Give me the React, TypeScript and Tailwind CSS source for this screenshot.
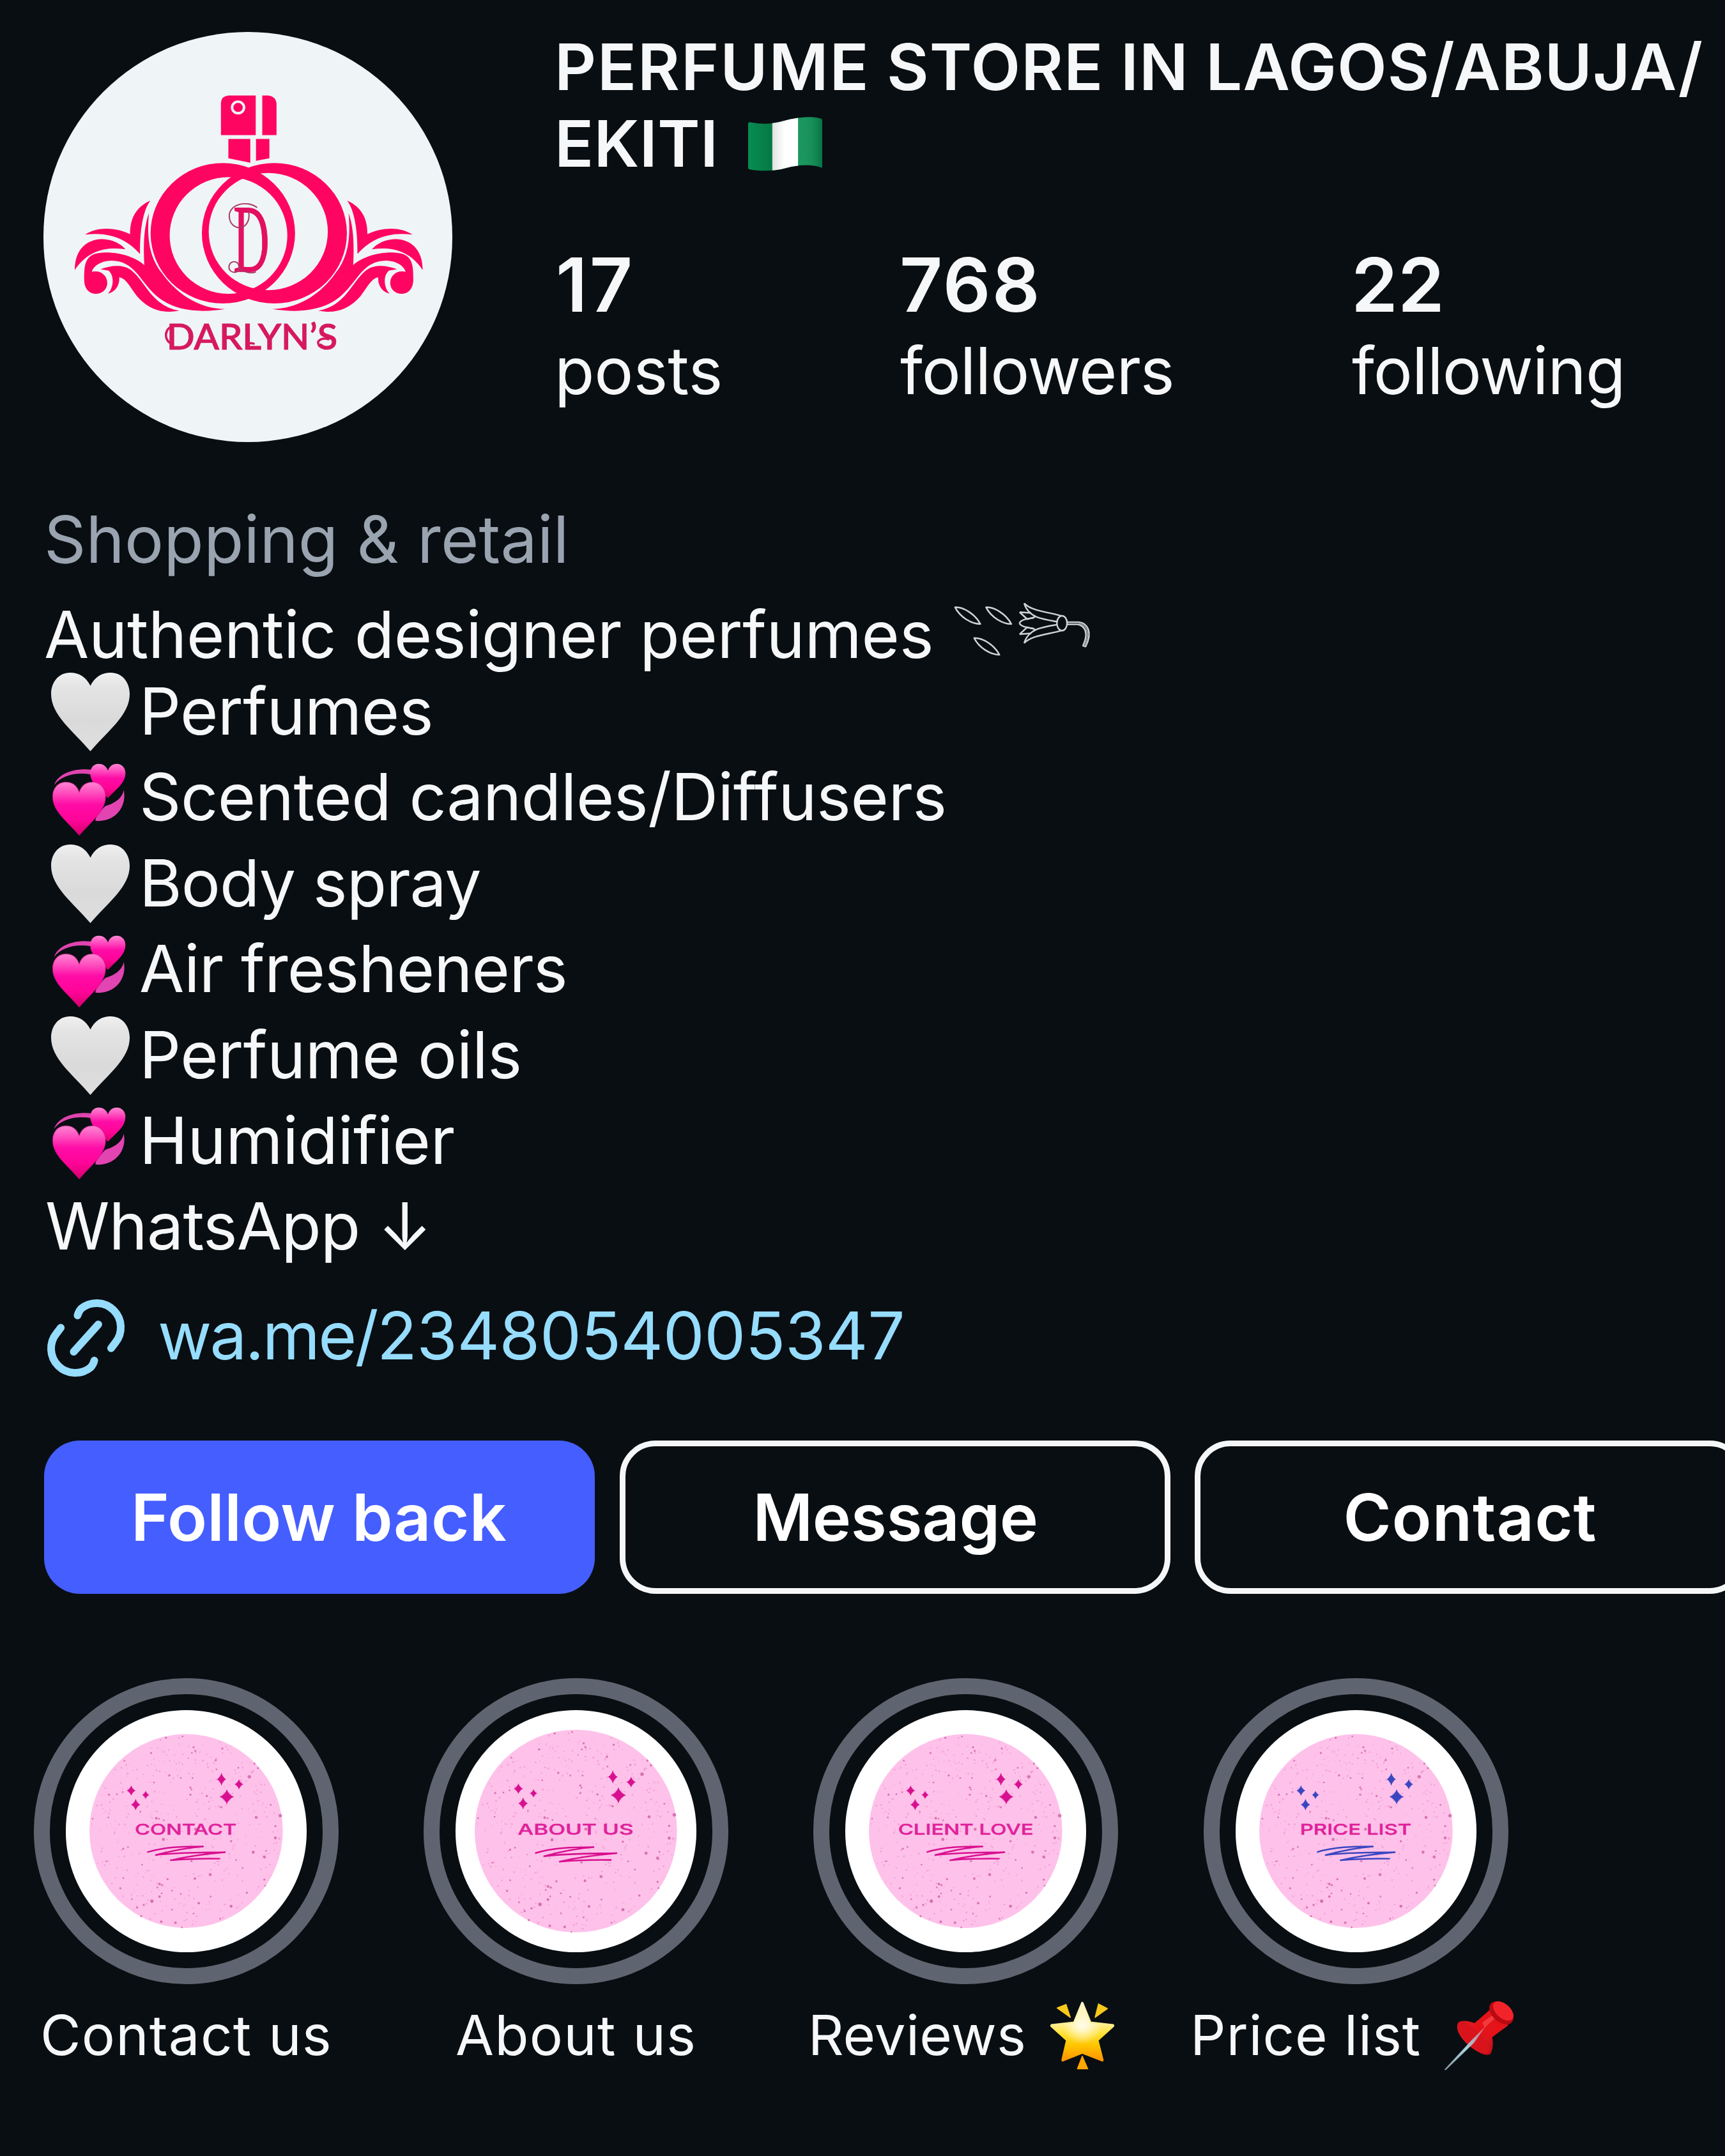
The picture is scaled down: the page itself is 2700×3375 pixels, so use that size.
import React from "react";

const WING_PATHS = [
  "M437 655 C412 690 400 760 401 848 C360 800 300 765 208 778 C250 750 310 750 366 776 C366 720 385 680 437 655Z",
  "M172 906 C172 830 215 795 268 794 C305 795 335 812 350 831 C290 822 220 830 172 906Z",
  "M245 992 C215 990 205 965 205 940 C205 890 205 845 270 843 C330 840 385 860 416 888 C412 810 415 750 432 700 C425 790 432 860 480 920 C540 1005 620 1046 700 1047 C620 1060 530 1058 465 1005 C400 950 385 872 300 872 C265 873 238 890 232 912 C262 905 287 925 286 955 C284 980 265 992 245 992Z",
  "M262 903 C300 888 340 885 368 905 C420 945 440 1035 538 1053 C480 1065 430 1048 390 1000 C365 965 350 935 328 932 C330 960 315 985 288 991 C305 975 315 930 290 908Z",
];

function Wing() {
  return (
    <>
      {WING_PATHS.map((d) => (
        <path key={d} d={d} />
      ))}
    </>
  );
}

function Avatar() {
  return (
    <div className="mt-[50px] h-[642px] w-[640px] shrink-0 overflow-hidden rounded-full bg-[#eff5f6]">
      <svg viewBox="62 45 1435 1483" preserveAspectRatio="none" className="block h-full w-full" fill="#ff0562">
        <path d="M685 418 V300 Q687 277 712 275 H807 V418Z" />
        <path d="M830 275 H850 Q878 278 880 305 V418 H830Z" />
        <circle cx="745" cy="318" r="21" fill="none" stroke="#eff5f6" strokeWidth="9" />
        <path d="M711 432 H788 V518 L711 502Z" />
        <path d="M808 432 H855 V502 L808 511Z" />
        <path
          fillRule="evenodd"
          d="M438 773 a253.500 254 0 1 0 507 0 a253.500 254 0 1 0 -507 0Z M505 781 a206.500 211 0 1 0 413 0 a206.500 211 0 1 0 -413 0Z"
        />
        <path
          fillRule="evenodd"
          d="M618 773 a254.500 254 0 1 0 509 0 a254.500 254 0 1 0 -509 0Z M642 767 a209 212 0 1 0 418 0 a209 212 0 1 0 -418 0Z"
        />
        <Wing />
        <g transform="translate(1565 0) scale(-1 1)">
          <Wing />
        </g>
        <text
          transform="translate(735 912) skewX(5)"
          fontSize="350"
          textLength="126"
          lengthAdjust="spacingAndGlyphs"
          fontFamily="Liberation Serif, serif"
          fontStyle="italic"
          fill="#e30f60"
          stroke="#e30f60"
          strokeWidth="3"
        >
          D
        </text>
        <g fill="none" stroke="#a53b66" strokeWidth="4.500">
          <path d="M812 680 C775 652 713 668 714 712 C716 748 748 762 768 746 C785 732 785 708 782 694" />
          <path d="M750 903 C738 922 712 915 713 893 C715 870 748 870 748 893 C755 912 790 922 808 912" />
        </g>
        <text
          x="494"
          y="1194"
          fontSize="128"
          textLength="600"
          lengthAdjust="spacingAndGlyphs"
          fontFamily="Lato, sans-serif"
          fontWeight="500"
          fill="#d6195f"
          stroke="#d6195f"
          strokeWidth="2.500"
        >
          DARLYN’S
        </text>
        <g fill="none" stroke="#d6195f" strokeWidth="8" strokeLinecap="round">
          <path d="M510 1172 C484 1160 484 1112 524 1107" />
          <path d="M784 1190 C770 1184 776 1166 800 1172" />
          <path d="M1030 1180 C1016 1160 1040 1150 1062 1156" />
        </g>
      </svg>
    </div>
  );
}

function NigeriaFlag() {
  return (
    <svg viewBox="278 370 98 210" preserveAspectRatio="none" className="mt-[18px] ml-[47px] block h-[86px] w-[116px]">
      <defs>
        <clipPath id="flag-shape">
          <path d="M278 398 Q278 390 283 394 C297 402 310 400 325 388 C342 373 360 368 373 378 Q376 380 376 386 L376 567 C362 552 345 555 328 568 C312 582 292 580 281 574 Q278 572 278 568Z" />
        </clipPath>
        <linearGradient id="flag-shade" x1="0" x2="1">
          <stop offset="0" stopColor="#000" stopOpacity="0" />
          <stop offset="0.300" stopColor="#000" stopOpacity="0.140" />
          <stop offset="0.500" stopColor="#fff" stopOpacity="0.100" />
          <stop offset="0.750" stopColor="#fff" stopOpacity="0.080" />
          <stop offset="1" stopColor="#000" stopOpacity="0.180" />
        </linearGradient>
      </defs>
      <g clipPath="url(#flag-shape)">
        <rect x="278" y="365" width="98" height="220" fill="#078d51" />
        <rect x="310" y="365" width="34" height="220" fill="#fff" />
        <rect x="278" y="365" width="98" height="220" fill="url(#flag-shade)" />
      </g>
    </svg>
  );
}

function FallingFlower() {
  const half = (
    <>
      <path d="M433 73 C468 112 560 116 606 132" />
      <path d="M433 73 C440 100 462 125 492 138 C525 150 560 155 588 160" />
      <path d="M411 115 L465 119 M411 115 L447 148 L484 138" />
      <path d="M410 167 C420 148 450 146 478 142" />
    </>
  );
  return (
    <svg
      viewBox="100 60 650 265"
      className="mt-[6px] ml-[31px] block h-[88px] w-[217px]"
      fill="none"
      stroke="#cfd2d4"
      strokeWidth="7.500"
      strokeLinejoin="round"
    >
      <path d="M107 92 C145 90 202 124 226 171 C186 171 131 140 107 92Z" />
      <path d="M253 92 C291 90 348 124 372 171 C332 171 277 140 253 92Z" />
      <path d="M197 237 C235 235 292 269 316 316 C276 316 221 285 197 237Z" />
      {half}
      <g transform="translate(0 334) scale(1 -1)">{half}</g>
      <ellipse cx="611" cy="167" rx="24" ry="35" />
      <path d="M636 162 H690 C735 166 755 215 722 277 L710 273 C738 215 720 180 685 172 H636" />
      <path d="M690 168 C728 172 745 215 716 274" stroke="#8b8f92" />
    </svg>
  );
}

function WhiteHeart() {
  return (
    <svg viewBox="60 40 370 370" className="mt-[7px] ml-[11px] block h-[123px] w-[123px]">
      <defs>
        <linearGradient id="white-heart" x1="0" y1="0" x2="0" y2="1">
          <stop offset="0" stopColor="#f0f0f0" />
          <stop offset="0.180" stopColor="#e4e4e4" />
          <stop offset="0.600" stopColor="#dadada" />
          <stop offset="1" stopColor="#dedede" />
        </linearGradient>
      </defs>
      <path
        fill="url(#white-heart)"
        d="M245 102 C225 60 190 40 150 40 C95 40 60 85 60 140 C60 240 160 310 245 410 C330 310 430 240 430 140 C430 85 395 40 340 40 C300 40 265 60 245 102Z"
      />
    </svg>
  );
}

function RevolvingHearts() {
  return (
    <svg viewBox="67 465 345 339" className="mt-[15px] ml-[13px] block h-[113px] w-[115px]">
      <defs>
        <linearGradient id="pink-heart" x1="0" y1="0" x2="0" y2="1">
          <stop offset="0" stopColor="#ff86d3" />
          <stop offset="0.200" stopColor="#ff4fbf" />
          <stop offset="0.420" stopColor="#ff0ca6" />
          <stop offset="0.700" stopColor="#ff0599" />
          <stop offset="1" stopColor="#d8006c" />
        </linearGradient>
      </defs>
      <path fill="#e044ae" d="M75 567 C95 510 170 486 250 494 L248 517 C180 505 110 520 75 567Z" />
      <path fill="#e244b2" d="M402 590 C418 665 365 742 270 735 C265 722 290 690 316 665 C352 655 395 632 402 590Z" />
      <path
        fill="url(#pink-heart)"
        d="M328 499 C320 476 302 467 285 467 C258 467 245 488 245 513 C246 560 290 585 328 628 C366 585 410 560 410 510 C410 486 394 467 368 467 C350 467 335 478 328 499Z"
      />
      <path
        fill="url(#pink-heart)"
        stroke="#c4127f"
        strokeOpacity="0.350"
        strokeWidth="5"
        d="M193 600 C182 566 157 553 131 553 C90 553 68 585 68 622 C68 690 135 735 193 803 C251 735 317 690 317 622 C317 585 292 553 255 553 C228 553 204 566 193 600Z"
      />
    </svg>
  );
}

function LinkIcon() {
  const hook = "M49.500 28 Q51 22 55 17.500 A38 38 0 0 1 108.500 71 L102 79.500";
  return (
    <svg
      viewBox="0 0 125.200 126.800"
      className="mt-[4px] block h-[127px] w-[125px]"
      fill="none"
      stroke="#96dcfd"
      strokeWidth="12"
      strokeLinecap="round"
    >
      <path d={hook} />
      <path d={hook} transform="rotate(180 62.600 63.400)" />
      <path d="M82 42 L43.500 85" />
    </svg>
  );
}

const STAR_PATH =
  "M1332 1290 L1370 1366 L1476 1376 L1402 1431 L1426 1508 L1332 1478 L1240 1508 L1262 1431 L1188 1376 L1294 1366Z";

function GlowingStar() {
  return (
    <svg viewBox="1182 1280 300 268" preserveAspectRatio="none" className="mt-0 ml-[38px] block h-[109px] w-[100px] shrink-0">
      <defs>
        <linearGradient id="star-fill" x1="0" y1="0" x2="0" y2="1">
          <stop offset="0" stopColor="#fff6c8" />
          <stop offset="0.350" stopColor="#fff09a" />
          <stop offset="0.550" stopColor="#ffe02f" />
          <stop offset="0.750" stopColor="#ffc300" />
          <stop offset="1" stopColor="#ff9500" />
        </linearGradient>
        <radialGradient id="star-glow" cx="0.500" cy="0.400" r="0.320">
          <stop offset="0" stopColor="#fffdf0" />
          <stop offset="1" stopColor="#fffdf0" stopOpacity="0" />
        </radialGradient>
      </defs>
      <path d={STAR_PATH} fill="url(#star-fill)" stroke="url(#star-fill)" strokeWidth="12" strokeLinejoin="round" />
      <path d={STAR_PATH} fill="url(#star-glow)" />
      <g strokeWidth="4" strokeLinejoin="round">
        <path d="M1214 1308 L1256 1294 L1276 1344Z" fill="#f8c81c" stroke="#f8c81c" />
        <path d="M1450 1310 L1408 1292 L1392 1344Z" fill="#f8c81c" stroke="#f8c81c" />
        <path d="M1332 1493 L1358 1542 H1309Z" fill="#ffa705" stroke="#ffa705" />
      </g>
    </svg>
  );
}

function Pushpin() {
  return (
    <svg viewBox="0 0 111 109" className="ml-[36px] block h-[109px] w-[111px] shrink-0">
      <defs>
        <linearGradient id="pin-body" x1="0" y1="0" x2="1" y2="1">
          <stop offset="0" stopColor="#c3121c" />
          <stop offset="0.450" stopColor="#f01d22" />
          <stop offset="1" stopColor="#a80812" />
        </linearGradient>
        <linearGradient id="pin-needle" x1="0" y1="1" x2="1" y2="0">
          <stop offset="0" stopColor="#8a979c" />
          <stop offset="0.500" stopColor="#a5d3e0" />
          <stop offset="1" stopColor="#d8606a" />
        </linearGradient>
      </defs>
      <path
        d="M22 35 C27 29 40 32 48 35 L69 18 L99 40 L75 55 C77 62 78 74 73 83 C65 90 42 74 33 64 C24 54 18 44 22 35Z"
        fill="url(#pin-body)"
      />
      <ellipse cx="46" cy="58" rx="33" ry="12" transform="rotate(45 46 58)" fill="#d8131c" />
      <path d="M46 37 L72 14 L101 38 L77 56 C70 60 58 56 50 47Z" fill="#e4131a" />
      <path d="M60 34 L80 20 L84 24 L64 42Z" fill="#ff5a58" opacity="0.550" />
      <ellipse cx="90" cy="19" rx="22" ry="14" transform="rotate(42 90 19)" fill="#b90a12" />
      <ellipse cx="93" cy="16" rx="19" ry="11" transform="rotate(42 93 16)" fill="#f2242a" />
      <path d="M0.500 108 L43 62 L66 39 L47 66 L3 108.500Z" fill="url(#pin-needle)" />
    </svg>
  );
}

const SPECKS: [number, number, number][] = [
  [660, 272, 5], [738, 267, 4], [790, 308, 5], [798, 322, 5], [782, 330, 4], [925, 313, 5], [590, 330, 5], [895, 357, 5],
  [465, 360, 4], [1076, 371, 5], [1092, 388, 5], [1000, 387, 4], [676, 416, 5], [730, 426, 4], [785, 426, 4], [897, 393, 4],
  [1052, 421, 8], [604, 443, 4], [775, 462, 5], [780, 470, 4], [393, 490, 5], [430, 488, 4], [457, 480, 4], [775, 490, 5],
  [852, 495, 5], [1152, 529, 4], [920, 538, 5], [540, 555, 4], [615, 580, 6], [628, 582, 4], [650, 588, 4], [1084, 577, 7],
  [1197, 570, 8], [316, 582, 4], [390, 577, 4], [1174, 610, 5], [800, 622, 7], [648, 661, 7], [1174, 655, 7], [966, 668, 5],
  [460, 697, 5], [482, 690, 4], [1070, 710, 7], [1122, 728, 7], [780, 744, 5], [380, 745, 4], [990, 740, 4], [1130, 705, 4],
  [548, 758, 4], [868, 796, 7], [796, 811, 6], [668, 813, 5], [460, 809, 4], [630, 832, 6], [642, 836, 5], [446, 848, 5],
  [620, 845, 4], [1122, 815, 5], [1040, 865, 5], [1126, 838, 4], [630, 880, 6], [594, 897, 8], [640, 868, 4], [688, 857, 4],
  [814, 905, 6], [966, 917, 7], [556, 912, 5], [525, 922, 5], [688, 930, 4], [544, 955, 5], [638, 976, 6], [705, 980, 6],
  [790, 945, 4], [870, 880, 4], [1020, 770, 4], [730, 870, 4], [500, 890, 4], [915, 965, 4], [735, 998, 4], [765, 350, 3],
];

// Fine paper grain, generated from a fixed seed so every cover shares one texture.
const GRAIN: [number, number, number][] = (() => {
  let s = 7;
  const next = () => (s = (s * 16807) % 2147483647) / 2147483647;
  return Array.from({ length: 420 }, () => {
    const a = next() * Math.PI * 2;
    const r = Math.sqrt(next());
    return [755 + Math.cos(a) * r * 448, 629 + Math.sin(a) * r * 366, 1.5 + next() * 2] as [number, number, number];
  });
})();

const SPARKLES: [number, number, number, number][] = [
  [497, 474, 21, 20], [565, 491, 17, 16], [518, 528, 22, 22], [921, 431, 22, 25], [1003, 450, 21, 20], [946, 498, 34, 29],
];

interface Highlight {
  label: string;
  title: string;
  x: number;
  width: number;
  ink: string;
  zoom: number;
  tracking: string;
  extra?: React.ReactNode;
}

function Cover({ h }: { h: Highlight }) {
  return (
    <svg viewBox="190 166 1131 927" preserveAspectRatio="none" className="block h-full w-full">
      <g transform={`translate(755 629) scale(${h.zoom}) translate(-755 -629)`}>
        <ellipse cx="755" cy="629" rx="454" ry="371" fill="#fec1ea" />
        <g fill="#e06fb0" opacity="0.400">
          {GRAIN.map(([x, y, r], i) => (
            <ellipse key={i} cx={x} cy={y} rx={r * 1.2} ry={r} />
          ))}
        </g>
        <g fill="#b8357f" opacity="0.550">
          {SPECKS.map(([x, y, r], i) => (
            <ellipse key={i} cx={x} cy={y} rx={r} ry={r * 0.8} />
          ))}
        </g>
        <g fill={h.ink}>
          {SPARKLES.map(([x, y, rx, ry]) => (
            <React.Fragment key={x}>
              <ellipse cx={x} cy={y} rx={rx * 0.7} ry={ry * 0.65} opacity="0.200" />
              <path
                d={`M${x} ${y - ry} Q${x + rx * 0.25} ${y - ry * 0.25} ${x + rx} ${y} Q${x + rx * 0.25} ${y + ry * 0.25} ${x} ${y + ry} Q${x - rx * 0.25} ${y + ry * 0.25} ${x - rx} ${y} Q${x - rx * 0.25} ${y - ry * 0.25} ${x} ${y - ry}Z`}
              />
            </React.Fragment>
          ))}
        </g>
        <path
          d="M572 710 C650 690 740 688 835 688 C770 692 690 704 612 721 C720 710 830 712 938 710 C850 716 760 726 682 741 C760 735 840 734 915 735"
          fill="none"
          stroke={h.ink}
          strokeWidth="6"
          strokeLinejoin="round"
        />
      </g>
      <text
        x={h.x}
        y="643"
        fontSize="56"
        textLength={h.width}
        lengthAdjust="spacingAndGlyphs"
        fontFamily="Inter, sans-serif"
        fontWeight="500"
        fill="#e0219a"
        stroke="#e0219a"
        strokeWidth="1"
      >
        {h.title}
      </text>
    </svg>
  );
}

const HIGHLIGHTS: Highlight[] = [
  { label: "Contact us", title: "CONTACT", x: 514, width: 478, ink: "#d8108f", zoom: 1, tracking: "tracking-[1.2px]" },
  { label: "About us", title: "ABOUT US", x: 482, width: 544, ink: "#d8108f", zoom: 1.046, tracking: "tracking-[1.25px]" },
  {
    label: "Reviews",
    title: "CLIENT LOVE",
    x: 438,
    width: 636,
    ink: "#d8108f",
    zoom: 1,
    tracking: "-ml-[15px] tracking-[0.2px]",
    extra: <GlowingStar />,
  },
  {
    label: "Price list",
    title: "PRICE LIST",
    x: 492,
    width: 524,
    ink: "#3a46c0",
    zoom: 1,
    tracking: "-ml-[10px] tracking-[0.9px]",
    extra: <Pushpin />,
  },
];

function HighlightItem({ h }: { h: Highlight }) {
  return (
    <div className="flex w-[477px] shrink-0 flex-col items-center">
      <div className="flex h-[479px] w-[477px] items-center justify-center rounded-full border-[25px] border-[#5f6570]">
        <div className="h-[379px] w-[377px] overflow-hidden rounded-full bg-white">
          <Cover h={h} />
        </div>
      </div>
      <div className="mt-[26px] flex justify-center text-[87px] leading-[108px] whitespace-nowrap">
        <span className={h.tracking}>{h.label}</span>
        {h.extra}
      </div>
    </div>
  );
}

const LIST: { icon: "white" | "pink"; text: string; tracking: string }[] = [
  { icon: "white", text: "Perfumes", tracking: "tracking-[-0.6px]" },
  { icon: "pink", text: "Scented candles/Diffusers", tracking: "tracking-[-0.5px]" },
  { icon: "white", text: "Body spray", tracking: "tracking-[-1px]" },
  { icon: "pink", text: "Air fresheners", tracking: "tracking-[-0.9px]" },
  { icon: "white", text: "Perfume oils", tracking: "tracking-[-0.45px]" },
  { icon: "pink", text: "Humidifier", tracking: "tracking-[-0.4px]" },
];

export default function App() {
  return (
    <div className="h-[3375px] w-[2700px] overflow-hidden bg-[#090e12] font-['Inter',sans-serif] text-[102px] text-[#f6f7f8]">
      <header className="flex h-[777px] pl-[68px]">
        <Avatar />
        <div className="pt-[44px] pl-[160px]">
          <h1 className="text-[101px] leading-[120px] font-semibold whitespace-nowrap">
            <div className="tracking-[1.1px]">
              <span className="tracking-[1.9px]">PERFUME</span> STORE IN LAGOS/ABUJA/
            </div>
            <div className="flex">
              <span className="tracking-[0.3px]">EKITI</span>
              <NigeriaFlag />
            </div>
          </h1>
          <div className="mt-[92px] flex">
            <div className="w-[541px]">
              <div className="ml-[2px] text-[117px] leading-[140px] font-semibold tracking-[3.4px]">17</div>
              <div className="leading-[128px] tracking-[-0.1px]">posts</div>
            </div>
            <div className="w-[708px]">
              <div className="-ml-px text-[117px] leading-[140px] font-semibold tracking-[2.2px]">768</div>
              <div className="leading-[128px] tracking-[-1.05px]">followers</div>
            </div>
            <div>
              <div className="-ml-[2px] text-[117px] leading-[140px] font-semibold">22</div>
              <div className="-ml-px leading-[128px] tracking-[-0.9px]">following</div>
            </div>
          </div>
        </div>
      </header>

      <section className="pl-[69px]">
        <div className="leading-[134px] tracking-[0.15px] text-[#9aa4b0]">Shopping &amp; retail</div>
        <div className="mt-[23px] flex leading-[119px]">
          <span className="tracking-[-0.35px]">Authentic designer perfumes</span>
          <FallingFlower />
        </div>
        <ul className="-mt-[7px]">
          {LIST.map((row) => (
            <li key={row.text} className="flex h-[134.4px] leading-[134.4px]">
              <div className="w-[149px] shrink-0">{row.icon === "white" ? <WhiteHeart /> : <RevolvingHearts />}</div>
              <span className={row.tracking}>{row.text}</span>
            </li>
          ))}
        </ul>
        <div className="ml-[2px] leading-[134.4px] tracking-[-0.9px]">WhatsApp ↓</div>
      </section>

      <div className="mt-[40px] ml-[72px] flex text-[#96dcfd]">
        <LinkIcon />
        <div className="ml-[50px] text-[103px] leading-[128px] tracking-[-0.45px]">
          <span className="tracking-[-2.700px]">wa.me/</span>2348054005347
        </div>
      </div>

      <div className="mt-[97px] ml-[69px] flex gap-[38.5px] font-semibold text-white">
        <button className="h-[240px] w-[862px] shrink-0 rounded-[56px] bg-[#455eff] pr-[2px] leading-[240px] tracking-[0.3px]">
          Follow back
        </button>
        <button className="h-[240px] w-[862px] shrink-0 rounded-[56px] border-[9px] border-[#f5f6f7] pl-[2px] leading-[222px] tracking-[-0.35px]">
          Message
        </button>
        <button className="h-[240px] w-[862px] shrink-0 rounded-[56px] border-[9px] border-[#f5f6f7] leading-[222px] tracking-[1px]">
          Contact
        </button>
      </div>

      <div className="mt-[132.5px] ml-[53px] flex gap-[133.2px]">
        {HIGHLIGHTS.map((h) => (
          <HighlightItem key={h.label} h={h} />
        ))}
      </div>
    </div>
  );
}
